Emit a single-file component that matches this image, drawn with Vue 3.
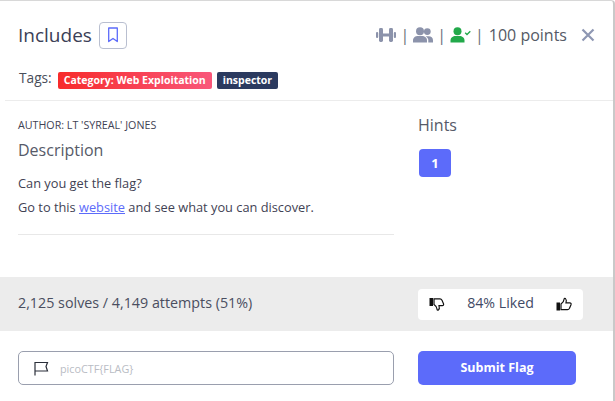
<script setup>
const tags = [
  { label: 'Category: Web Exploitation', kind: 'red' },
  { label: 'inspector', kind: 'navy' }
]
</script>

<template>
  <div class="modal">
    <header class="head">
      <div class="title-wrap">
        <h1 class="title">Includes</h1>
        <button class="mark" aria-label="bookmark">
          <svg width="12" height="16" viewBox="0 0 12 16" fill="none" stroke="#5c6bfa" stroke-width="1.3"><path d="M1.700 1h8.600v13.600L6 11.400 1.700 14.600z" stroke-linejoin="round"/></svg>
        </button>
      </div>
      <div class="meta">
        <svg width="20" height="16" viewBox="0 0 20 16" fill="#8c93ab"><rect x="0" y="5" width="2.200" height="6" rx="1"/><rect x="3" y="1" width="4" height="14" rx="1.400"/><rect x="7" y="6.500" width="6" height="3"/><rect x="13" y="1" width="4" height="14" rx="1.400"/><rect x="17.800" y="5" width="2.200" height="6" rx="1"/></svg>
        <span class="sep">|</span>
        <svg width="20" height="16" viewBox="0 0 20 16" fill="#8c93ab"><circle cx="7" cy="4.300" r="4"/><circle cx="14.300" cy="4.600" r="3.400"/><path d="M0 15.500v-2.200C0 10.500 2.500 9 5 9h4c2.600 0 5 1.600 5 4.300v2.200z"/><path d="M12.500 9.200h3.300c2.300 0 4.200 1.500 4.200 4v2.300h-4.700v-2.500c0-1.500-1.100-3-2.800-3.800z"/></svg>
        <span class="sep">|</span>
        <svg width="21" height="16" viewBox="0 0 21 16"><circle cx="7.500" cy="4.300" r="4" fill="#22a94a"/><path d="M0.500 15.500v-2C0.500 10.500 3 9 5.500 9h4c2.500 0 5 1.500 5 4.500v2z" fill="#22a94a"/><path d="M15.200 5.800l1.800 1.700 3.300-3.300" fill="none" stroke="#22a94a" stroke-width="1.300"/></svg>
        <span class="sep">|</span>
        <span class="points">100 points</span>
        <svg class="close" width="14" height="14" viewBox="0 0 14 14" stroke="#8e97b3" stroke-width="2.200" fill="none"><path d="M1.500 1.500l11 11M12.500 1.500l-11 11"/></svg>
      </div>
    </header>

    <div class="tags">
      <span class="tags-label">Tags:</span>
      <span v-for="t in tags" :key="t.label" class="tag" :class="t.kind">{{ t.label }}</span>
    </div>

    <div class="body">
      <section class="main">
        <p class="author">AUTHOR: LT 'SYREAL' JONES</p>
        <h2 class="sub">Description</h2>
        <p class="line first">Can you get the flag?</p>
        <p class="line">Go to this <a href="#" class="link">website</a> and see what you can discover.</p>
      </section>
      <aside class="hints">
        <h2 class="sub">Hints</h2>
        <button class="hint">1</button>
      </aside>
    </div>

    <div class="stats">
      <span class="solves">2,125 solves / 4,149 attempts (51%)</span>
      <div class="likes">
        <svg width="16" height="16" viewBox="0 0 16 16"><rect x="0.500" y="2" width="3.500" height="8" fill="#111"/><path d="M5 2.800h6c1 0 1.500.5 2 1.500l1.500 3.500c.4 1-.2 1.800-1.200 1.800H10c.4 1.500.5 3.500-.5 4.300-1 .6-1.500 0-1.500-1 0-1.900-1.700-3.400-3-4.300z" fill="#fff" stroke="#111" stroke-width="1.200"/></svg>
        <span class="liked">84% Liked</span>
        <svg width="16" height="16" viewBox="0 0 16 16"><rect x="0.500" y="6.500" width="3.500" height="8" fill="#111"/><path d="M5 13.700h6.500c1 0 1.500-.5 2-1.500l1.500-3.500c.4-1-.2-1.800-1.200-1.800H10c.4-1.500.5-3.500-.5-4.300-1-.6-1.500 0-1.500 1 0 1.900-1.700 3.400-3 4.300z" fill="#fff" stroke="#111" stroke-width="1.200"/></svg>
      </div>
    </div>

    <form class="submit" @submit.prevent>
      <label class="field">
        <svg width="16" height="15" viewBox="0 0 16 15" fill="none" stroke="#2b2f3a" stroke-width="1.200"><path d="M2 14.500V1.500h12.500L13 5.500l1.500 4.500H2"/></svg>
        <input class="input" placeholder="picoCTF{FLAG}" />
      </label>
      <button class="send">Submit Flag</button>
    </form>
  </div>
</template>

<style>
html, body { margin: 0; background: #fff; overflow: hidden; }
</style>

<style scoped>
.modal {
  width: 615px;
  height: 401px;
  box-sizing: border-box;
  border-top: 1px solid #d8d8d8;
  border-right: 2px solid #c9c9c9;
  border-top-right-radius: 4px;
  font-family: "Open Sans", sans-serif;
  color: #3f4254;
  background: #fff;
  display: flex;
  flex-direction: column;
}
.head {
  height: 66px;
  padding: 2px 18px 0 18px;
  display: flex;
  justify-content: space-between;
  align-items: center;
  box-sizing: border-box;
  flex: none;
}
.title-wrap { display: flex; align-items: center; gap: 7px; }
.title { margin: 0; font-size: 19px; font-weight: 400; color: #3b4056; line-height: 24px; }
.mark {
  width: 28px; height: 27px; padding: 0; border: 1px solid #b9bfd0; border-radius: 4px;
  background: #fff; display: flex; align-items: center; justify-content: center;
}
.meta { display: flex; align-items: center; gap: 5px; font-size: 16px; color: #555a66; }
.sep { font-size: 16px; margin: 0 -1px; color: #6b6f7a; opacity: 0.99; }
.points { margin-left: 1px; }
.close { margin-left: 9px; }
.tags {
  height: 34px;
  margin-left: 5px;
  padding-left: 14px;
  border-bottom: 1px solid #ececec;
  display: flex;
  align-items: flex-start;
  gap: 5px;
  box-sizing: border-box;
  flex: none;
}
.tags-label { font-size: 13.700px; line-height: 22px; color: #4a4e5a; margin-right: 1px; }
.tag {
  margin-top: 5px;
  height: 17px; line-height: 17px; padding: 0 6px; border-radius: 2px;
  font-size: 10.500px; font-weight: 700; color: #fff;
}
.red { background: linear-gradient(90deg, #f72b2b, #f9577a); }
.navy { background: #2b3a5f; }
.body { flex: none; height: 176px; display: flex; padding: 0 0 0 18px; box-sizing: border-box; }
.main { width: 376px; height: 134px; border-bottom: 1px solid #e8e8e8; box-sizing: border-box; flex: none; }
.author { margin: 16px 0 0; font-size: 10.700px; line-height: 16px; color: #3f4254; }
.sub { margin: 6px 0 0; font-size: 16px; font-weight: 400; line-height: 22px; color: #565a68; }
.line { margin: 0; font-size: 12.800px; line-height: 24px; color: #3f4254; }
.first { margin-top: 10px; }
.link { color: #5c6bfa; }
.hints { margin-left: 24px; padding-top: 13px; }
.hints .sub { margin: 0; }
.hint {
  margin: 13px 0 0 1px; display: block;
  width: 32px; height: 28px; border: 0; border-radius: 4px; background: #5c6bfa; color: #fff;
  font: 700 13px "Open Sans", sans-serif;
}
.stats {
  height: 54px;
  background: #ececec;
  padding: 0 30px 0 18px;
  display: flex;
  align-items: center;
  justify-content: space-between;
  flex: none;
  box-sizing: border-box;
}
.solves { font-size: 14.300px; color: #4a4e5f; margin-bottom: 4px; }
.liked { margin-bottom: 4px; }
.likes {
  width: 165px; height: 31px; padding: 0 11px; box-sizing: border-box; background: #fff; border-radius: 4px;
  display: flex; align-items: center; justify-content: space-between; font-size: 14.200px; color: #3f4a66;
}
.submit {
  flex: 1;
  padding: 20px 37px 0 18px;
  display: flex;
  align-items: flex-start;
  justify-content: space-between;
  box-sizing: border-box;
}
.field {
  width: 376px; height: 34px; border: 1px solid #9a9fae; border-radius: 5px; box-sizing: border-box;
  display: flex; align-items: center; padding-left: 14px; gap: 11px;
}
.input { border: 0; outline: 0; flex: 1; min-width: 0; font: 10.800px "Open Sans", sans-serif; padding: 0; color: #333; background: transparent; }
.input::placeholder { color: #b9bcc4; opacity: 1; }
.send {
  width: 158px; height: 34px; padding: 0 0 2px; border: 0; border-radius: 5px; background: #5c6bfa; color: #fff;
  font: 700 12.500px "Open Sans", sans-serif;
}
</style>
